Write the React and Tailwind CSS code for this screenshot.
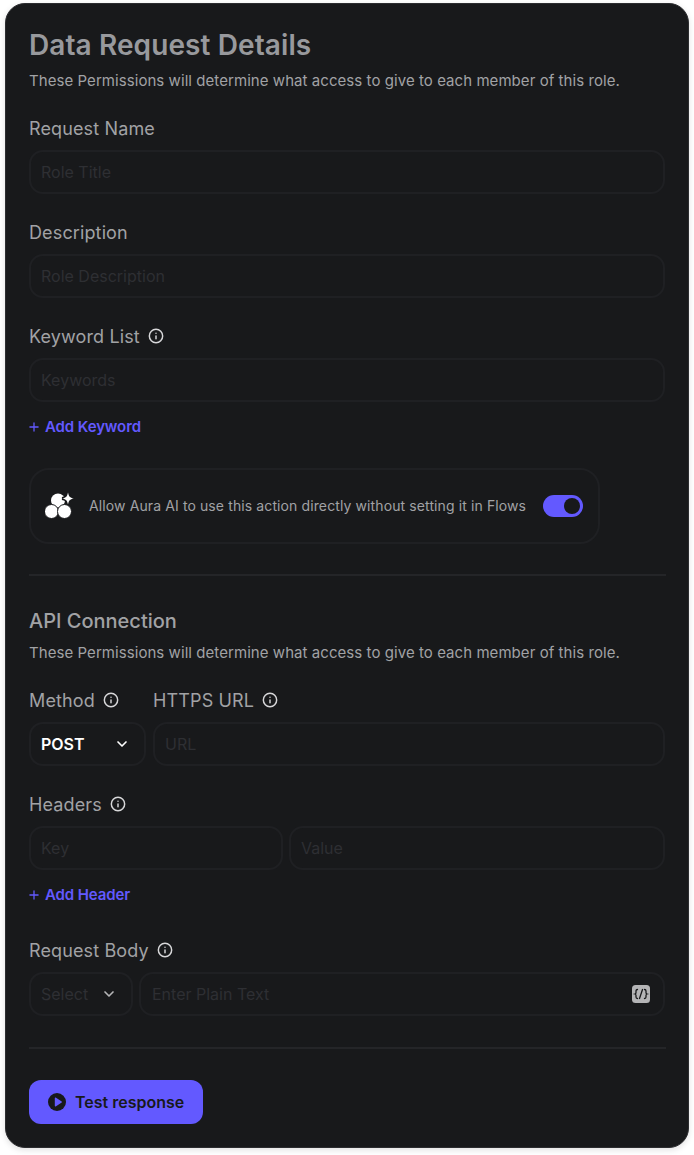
import { ChevronDown, Info, Plus } from "lucide-react";

const inputClass =
  "h-[44px] min-w-0 rounded-[14px] border-2 border-[#1f2023] bg-transparent px-[10px] text-[16px] text-white outline-none placeholder:text-[#2e2f33]";

const Label = ({ children, info }) => (
  <div className="mb-[7px] flex h-[28px] items-center gap-[8px] text-[18px] leading-[28px] tracking-[0.13px] text-[#a1a2a5]">
    <span>{children}</span>
    {info && <Info size={16} strokeWidth={2.2} className="-mt-[2px] text-[#d8d8da]" />}
  </div>
);

const Select = ({ value, width, muted }) => (
  <div
    className={`${width} flex h-[44px] shrink-0 items-center justify-between rounded-[14px] border-2 border-[#1f2023] pl-[10px] pr-[14px] text-[16px] leading-[24px] ${
      muted ? "text-[#2e2f33]" : "font-semibold text-white"
    }`}
  >
    <span>{value}</span>
    <ChevronDown size={16} strokeWidth={2.5} className={muted ? "text-[#b5b5b7]" : "text-white"} />
  </div>
);

const AddLink = ({ children, className }) => (
  <div className={`${className} flex h-[22px] items-center gap-[4px] text-[15px] font-semibold tracking-[-0.1px] text-[#6359ff]`}>
    <Plus size={14} strokeWidth={2.2} className="-ml-[2px]" />
    <span>{children}</span>
  </div>
);

const sparkle = "M23 .5c.8 4 1.800 5.200 5.800 6-4 .8-5 2-5.800 6-.8-4-1.800-5.200-5.800-6 4-.8 5-2 5.800-6z";

const AuraIcon = () => (
  <svg width="30" height="28" viewBox="0 0 30 28" fill="white">
    <circle cx="13" cy="8.500" r="7" />
    <path d={sparkle} stroke="#18191b" strokeWidth="3" />
    <path d={sparkle} />
    <circle cx="6.500" cy="19.500" r="7" stroke="#18191b" strokeWidth="1" />
    <circle cx="19.500" cy="19.500" r="7" stroke="#18191b" strokeWidth="1" />
  </svg>
);

const PlayIcon = () => (
  <svg width="18" height="18" viewBox="0 0 18 18">
    <circle cx="9" cy="9" r="9" fill="#18191b" />
    <path d="M6.800 5.200c0-.5.500-.8.900-.6l6 3.800c.4.300.4.900 0 1.200l-6 3.800c-.4.200-.9-.1-.9-.6z" fill="#6359ff" />
  </svg>
);

const CodeIcon = () => (
  <svg width="18" height="18" viewBox="0 0 18 18" className="absolute right-[15px] top-[13px]">
    <rect width="18" height="18" rx="3.500" fill="#b4b4b6" />
    <path
      d="M5.500 4.500c-1.200 0-1.500.6-1.500 1.500v1.500c0 .8-.3 1.300-1 1.500.7.200 1 .7 1 1.500V12c0 .9.300 1.500 1.500 1.500M12.500 4.500c1.200 0 1.500.6 1.500 1.500v1.500c0 .8.300 1.300 1 1.500-.7.200-1 .7-1 1.500V12c0 .9-.3 1.500-1.500 1.500M10.500 4.500l-3 9"
      fill="none"
      stroke="#18191b"
      strokeWidth="1.300"
      strokeLinecap="round"
    />
  </svg>
);

export default function App() {
  return (
    <div className="min-h-screen bg-white px-[5px] pt-[3px] font-['Inter',sans-serif]">
      <div className="h-[1145px] w-[684px] rounded-[20px] border border-[#2c2d30] bg-[#18191b] px-[23px] pt-[23px] shadow-[0_2px_6px_rgba(0,0,0,0.12)]">
        <h1 className="text-[28px] font-semibold leading-[36px] tracking-[0.1px] text-[#98999d]">Data Request Details</h1>
        <p className="mt-[8px] text-[15px] leading-[20px] tracking-[0.06px] text-[#a1a2a5]">
          These Permissions will determine what access to give to each member of this role.
        </p>

        <div className="mt-[24px]">
          <Label>Request Name</Label>
          <input className={`${inputClass} w-full`} placeholder="Role Title" />
        </div>
        <div className="mt-[25px]">
          <Label>Description</Label>
          <input className={`${inputClass} w-full`} placeholder="Role Description" />
        </div>
        <div className="mt-[25px]">
          <Label info>Keyword List</Label>
          <input className={`${inputClass} w-full`} placeholder="Keywords" />
          <AddLink className="mt-[14px]">Add Keyword</AddLink>
        </div>

        <div className="mt-[30px] flex h-[76px] w-[571px] items-center rounded-[20px] border-2 border-[#1f2023] pl-[14px] pr-[15px]">
          <AuraIcon />
          <span className="ml-[14px] -mt-[2px] text-[14px] tracking-[0.11px] text-[#a1a2a5]">
            Allow Aura AI to use this action directly without setting it in Flows
          </span>
          <div className="ml-auto flex h-[22px] w-[40px] items-center justify-end rounded-full bg-[#6359ff] pr-[3px]">
            <div className="h-[16px] w-[16px] rounded-full bg-[#18191b]" />
          </div>
        </div>

        <div className="mt-[30px] h-[2px] w-[637px] bg-[#242528]" />

        <h2 className="mt-[31px] text-[20px] font-medium leading-[28px] text-[#a1a2a5]">API Connection</h2>
        <p className="mt-[8px] text-[15px] leading-[20px] tracking-[0.06px] text-[#a1a2a5]">
          These Permissions will determine what access to give to each member of this role.
        </p>

        <div className="mt-[24px] flex gap-[6px]">
          <div className="w-[118px] shrink-0">
            <Label info>Method</Label>
            <Select value="POST" width="w-[117px]" />
          </div>
          <div className="flex-1">
            <Label info>HTTPS URL</Label>
            <input className={`${inputClass} w-full`} placeholder="URL" />
          </div>
        </div>

        <div className="mt-[25px]">
          <Label info>Headers</Label>
          <div className="flex gap-[6px]">
            <input className={`${inputClass} w-[254px]`} placeholder="Key" />
            <input className={`${inputClass} flex-1`} placeholder="Value" />
          </div>
          <AddLink className="mt-[14px]">Add Header</AddLink>
        </div>

        <div className="mt-[31px]">
          <Label info>Request Body</Label>
          <div className="flex gap-[6px]">
            <Select value="Select" width="w-[104px]" muted />
            <div className="relative flex-1">
              <input className={`${inputClass} w-full pl-[11px]`} placeholder="Enter Plain Text" />
              <CodeIcon />
            </div>
          </div>
        </div>

        <div className="mt-[31px] h-[2px] w-[637px] bg-[#242528]" />

        <button className="mt-[31px] flex h-[44px] w-[174px] items-center gap-[9px] rounded-xl bg-[#6359ff] pl-[19px] text-[16px] font-semibold text-[#18191b]">
          <PlayIcon />
          Test response
        </button>
      </div>
    </div>
  );
}
